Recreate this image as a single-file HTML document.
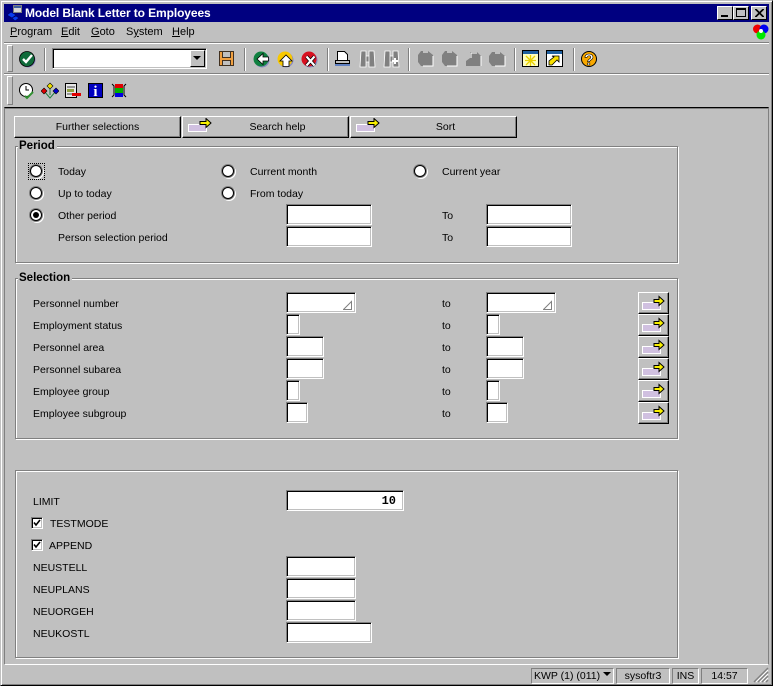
<!DOCTYPE html>
<html><head><meta charset="utf-8"><style>
html,body{margin:0;padding:0;background:#c0c0c0}
#w{position:relative;width:773px;height:686px;overflow:hidden;background:#c0c0c0;font:10.5px/14px "Liberation Sans",sans-serif;color:#000}
#w div,#w svg{position:absolute}
.t{white-space:nowrap;margin-top:1px}
.m{white-space:nowrap;font-size:11px}
.i{background:#fff;box-sizing:border-box;border-top:1px solid #808080;border-left:1px solid #808080;border-right:1px solid #fff;border-bottom:1px solid #fff;box-shadow:inset 1px 1px 0 #000,inset -1px -1px 0 #c0c0c0}
.g{box-sizing:border-box;border:1px solid #808080;box-shadow:1px 1px 0 #fff,inset 1px 1px 0 #fff}
.gt{background:#c0c0c0;font-weight:bold;padding:0 2px 0 1px;font-size:11.5px;white-space:nowrap}
.b{box-sizing:border-box;background:#c0c0c0;border-top:1px solid #fff;border-left:1px solid #fff;border-right:1px solid #000;border-bottom:1px solid #000;box-shadow:inset -1px -1px 0 #808080;text-align:center;line-height:21px}
.s{width:2px;height:23px;top:48px;background:linear-gradient(90deg,#808080 0,#808080 1px,#fff 1px)}
.gr{width:6px;box-sizing:border-box;border:1px solid;border-color:#fff #808080 #808080 #fff}
.f{box-sizing:border-box;height:16px;top:668px;border:1px solid;border-color:#808080 #fff #fff #808080;text-align:center;line-height:14px;white-space:nowrap}
.r{width:12px;height:12px;margin:-1px 0 0 -1px;border-radius:50%;background:#fff;box-sizing:border-box;border:1px solid #000;box-shadow:0 0 0 1px #808080,1px 1px 0 1px #fff}
u{text-decoration:underline}
</style></head><body><div id="w">
<!-- window frame -->
<div style="left:0;top:0;width:773px;height:686px;box-sizing:border-box;border:1px solid;border-color:#c0c0c0 #000 #000 #c0c0c0;box-shadow:inset 1px 1px 0 #fff,inset -1px -1px 0 #808080"></div>
<!-- title -->
<div style="left:4px;top:4px;width:765px;height:18px;background:#000080"></div>
<svg style="left:6px;top:4px" width="18" height="18"><rect x="7.500" y="1.500" width="8" height="7" fill="#d8d8d8" stroke="#808080"/><rect x="8" y="2" width="7" height="2" fill="#4060a0"/><path d="M1 11l4-3 5 3-4 3zM6 14l4-2 3 2-4 3z" fill="#0a3cf0" stroke="#000060" stroke-width=".6"/></svg>
<div class="m" style="left:25px;top:6px;color:#fff;font-weight:bold;font-size:12px;line-height:14px;letter-spacing:-.1px">Model Blank Letter to Employees</div>
<div style="left:717px;top:6px;width:16px;height:14px;box-sizing:border-box;background:#c0c0c0;border:1px solid;border-color:#fff #000 #000 #fff"><div style="left:3px;top:8px;width:7px;height:2px;background:#000"></div></div>
<div style="left:733px;top:6px;width:16px;height:14px;box-sizing:border-box;background:#c0c0c0;border:1px solid;border-color:#fff #000 #000 #fff"><div style="left:2px;top:1px;width:10px;height:9px;box-sizing:border-box;border:1px solid #000;border-top-width:2px"></div></div>
<div style="left:751px;top:6px;width:16px;height:14px;box-sizing:border-box;background:#c0c0c0;border:1px solid;border-color:#fff #000 #000 #fff"><svg style="left:3px;top:2px" width="9" height="8"><path d="M0 0l8 8M1 0l8 8M8 0l-8 8M9 0l-8 8" stroke="#000" stroke-width="1"/></svg></div>
<!-- menu -->
<div class="m" style="left:10px;top:25px"><u>P</u>rogram</div>
<div class="m" style="left:61px;top:25px"><u>E</u>dit</div>
<div class="m" style="left:91px;top:25px"><u>G</u>oto</div>
<div class="m" style="left:126px;top:25px">S<u>y</u>stem</div>
<div class="m" style="left:172px;top:25px"><u>H</u>elp</div>
<svg style="left:752px;top:22px" width="18" height="18"><circle cx="5.500" cy="7" r="4.500" fill="#f00000"/><circle cx="12" cy="7" r="4.500" fill="#0000f0"/><circle cx="9" cy="13" r="4.500" fill="#00e800"/><circle cx="9" cy="9" r="2" fill="#fff"/></svg>
<div style="left:4px;top:42px;width:765px;height:2px;background:linear-gradient(#808080 1px,#fff 1px)"></div>
<div style="left:4px;top:73px;width:765px;height:2px;background:linear-gradient(#808080 1px,#fff 1px)"></div>
<div class="gr" style="left:7px;top:45px;height:27px"></div>
<div class="gr" style="left:7px;top:76px;height:29px"></div>
<!-- toolbar 1 -->
<svg style="left:18px;top:50px" width="18" height="18"><circle cx="10" cy="10" r="7.500" fill="#8888c0"/><circle cx="9" cy="9" r="7.500" fill="#0f6b3a" stroke="#000" stroke-width=".8"/><path d="M5 9l3 3 6-7" fill="none" stroke="#fff" stroke-width="2.400"/></svg>
<div class="s" style="left:44px"></div>
<div class="i" style="left:52px;top:48px;width:155px;height:21px"></div>
<div style="left:190px;top:50px;width:15px;height:17px;box-sizing:border-box;background:#c0c0c0;border:1px solid;border-color:#fff #000 #000 #fff"></div>
<svg style="left:193px;top:56px" width="9" height="5"><path d="M0 0h8l-4 4z" fill="#000"/></svg>
<svg style="left:218px;top:50px" width="17" height="17"><path d="M1.500 1.500h14v14h-14z" fill="#f0a040" stroke="#403020"/><rect x="4.500" y="1.500" width="8" height="6" fill="#c0c0c0" stroke="#403020"/><rect x="4.500" y="10.500" width="8" height="5" fill="#c0c0c0" stroke="#403020"/></svg>
<div class="s" style="left:244px"></div>
<svg style="left:252px;top:50px" width="18" height="18"><circle cx="10" cy="10" r="7.500" fill="#8888c0"/><circle cx="9" cy="9" r="7.500" fill="#108040"/><path d="M16.500 7H11V3.500L5 9l6 5.500V11h5.500z" fill="#fff" stroke="#000" stroke-width=".8"/></svg>
<svg style="left:276px;top:50px" width="18" height="18"><circle cx="10" cy="10" r="7.500" fill="#8888c0"/><circle cx="9" cy="9" r="7.500" fill="#f8c800"/><path d="M7 16.500V11H4l6-6 6 6h-3v5.500z" fill="#fff" stroke="#000" stroke-width=".8"/></svg>
<svg style="left:300px;top:50px" width="18" height="18"><circle cx="10" cy="10" r="7.500" fill="#8888c0"/><circle cx="9" cy="9" r="7.500" fill="#d81020"/><path d="M6.500 6.500l8 9M14.500 6.500l-8 9" stroke="#000" stroke-width="3.600"/><path d="M6.500 6.500l8 9M14.500 6.500l-8 9" stroke="#fff" stroke-width="2.200"/></svg>
<div class="s" style="left:327px"></div>
<svg style="left:334px;top:50px" width="17" height="17"><path d="M3.500 1.500h7l3 3v6h-10z" fill="#fff" stroke="#000"/><path d="M1.500 10.500h14v3h-14z" fill="#c0c0c0" stroke="#000"/><path d="M1 14h15v2H1z" fill="#6080c0"/></svg>
<svg style="left:359px;top:49px" width="17" height="19"><path d="M2 2h5v16H1zM10 2h5l1 16h-6zM7 7h3v6H7z" fill="#808080" stroke="#fff" stroke-width=".8"/></svg>
<svg style="left:383px;top:49px" width="17" height="19"><path d="M2 2h5v16H1zM10 2h5l1 16h-6zM7 7h3v6H7z" fill="#808080" stroke="#fff" stroke-width=".8"/><path d="M12 9v6M9 12h6" stroke="#fff" stroke-width="2"/></svg>
<div class="s" style="left:408px"></div>
<svg style="left:417px;top:50px" width="17" height="17"><path d="M1 5l3-4h7l5 4v11H4l-3-4z" fill="#808080"/><path d="M6 2h5M16 6v10H6" stroke="#fff" fill="none"/></svg>
<svg style="left:441px;top:50px" width="17" height="17"><path d="M1 5l3-4h7l5 4v11H4l-3-4z" fill="#808080"/><path d="M6 2h5M16 6v10H6" stroke="#fff" fill="none"/></svg>
<svg style="left:465px;top:50px" width="17" height="17"><path d="M1 11l4-3V2h7l4 4v10H1z" fill="#808080"/><path d="M6 8V3h6M16 6v10" stroke="#fff" fill="none"/></svg>
<svg style="left:489px;top:50px" width="17" height="17"><path d="M0 6l3-4h8l5 4v10H3l-3-4z" fill="#808080"/><path d="M6 3h5M16 6v10H6" stroke="#fff" fill="none"/></svg>
<div class="s" style="left:514px"></div>
<svg style="left:522px;top:50px" width="18" height="18"><rect x=".5" y=".5" width="16" height="16" fill="#ffffc0" stroke="#000"/><rect x="1" y="1" width="15" height="3" fill="#2060a0"/><path d="M8.500 5v11M3 10.500h11M4 6l9 9M13 6l-9 9" stroke="#e8d000" stroke-width="1.300"/></svg>
<svg style="left:546px;top:50px" width="18" height="18"><rect x=".5" y=".5" width="16" height="16" fill="#fff" stroke="#000"/><rect x="1" y="1" width="15" height="3" fill="#2060a0"/><path d="M3 15v-4l5-4-2-1h7v6l-2-2-5 5z" fill="#f8e000" stroke="#000" stroke-width=".8"/></svg>
<div class="s" style="left:573px"></div>
<svg style="left:580px;top:50px" width="18" height="18"><circle cx="9" cy="9" r="7.500" fill="#f8a800" stroke="#000"/><text x="9" y="15" text-anchor="middle" font-family="Liberation Sans" font-weight="bold" font-size="16" fill="#fff" stroke="#000" stroke-width=".6">?</text></svg>
<!-- toolbar 2 -->
<svg style="left:18px;top:82px" width="18" height="18"><circle cx="8" cy="8" r="6.500" fill="#fff" stroke="#000"/><path d="M8 4v4h3" fill="none" stroke="#000"/><path d="M7 14l2 2 6-6" fill="none" stroke="#309030" stroke-width="2"/></svg>
<svg style="left:41px;top:82px" width="18" height="18"><path d="M9 3v10M3 9l6 7 6-7" fill="none" stroke="#208040"/><path d="M9 1l3 3-3 3-3-3z" fill="#f0e000" stroke="#000" stroke-width=".6"/><path d="M3 6l3 3-3 3-3-3z" fill="#e00000" stroke="#000" stroke-width=".6"/><path d="M15 6l3 3-3 3-3-3z" fill="#0000d0" stroke="#000" stroke-width=".6"/></svg>
<svg style="left:65px;top:83px" width="17" height="17"><rect x=".5" y=".5" width="11" height="14" fill="#e8e8e8" stroke="#000"/><path d="M2 4h8M2 11h6" stroke="#404040"/><rect x="2" y="6" width="7" height="3" fill="#90a040"/><rect x="7" y="10" width="9" height="3" fill="#e00000"/></svg>
<svg style="left:88px;top:83px" width="16" height="16"><rect x=".5" y=".5" width="14" height="14" fill="#0000c0" stroke="#000"/><text x="7.500" y="13" text-anchor="middle" font-family="Liberation Serif" font-weight="bold" font-size="15" fill="#fff">i</text></svg>
<svg style="left:111px;top:83px" width="16" height="16"><rect x="4" y="1" width="8" height="4" fill="#e00000"/><rect x="4" y="5" width="8" height="5" fill="#00b000"/><rect x="4" y="10" width="8" height="4" fill="#0000e0"/><path d="M1 1l2 2v9l-2 2M15 1l-2 2v9l2 2" fill="none" stroke="#000"/></svg>
<!-- content frame -->
<div style="left:4px;top:107px;width:765px;height:558px;box-sizing:border-box;border-top:1px solid #000;border-left:1px solid #808080;border-right:1px solid #808080;border-bottom:1px solid #fff;box-shadow:inset 0 1px 0 #808080"></div>
<!-- top buttons -->
<div class="b" style="left:14px;top:116px;width:167px;height:22px">Further selections</div>
<div class="b" style="left:182px;top:116px;width:167px;height:22px;padding-left:24px">Search help</div>
<div class="b" style="left:350px;top:116px;width:167px;height:22px;padding-left:24px">Sort</div>
<svg style="left:188px;top:118px" width="26" height="17"><rect x=".5" y="6.500" width="18" height="7" fill="#d0c0e0" stroke="#fff"/><path d="M12 3.500h6v-3l5 4.500-5 4.500v-3h-6z" fill="#f8f000" stroke="#000"/></svg>
<svg style="left:356px;top:118px" width="26" height="17"><rect x=".5" y="6.500" width="18" height="7" fill="#d0c0e0" stroke="#fff"/><path d="M12 3.500h6v-3l5 4.500-5 4.500v-3h-6z" fill="#f8f000" stroke="#000"/></svg>
<!-- Period -->
<div class="g" style="left:15px;top:146px;width:663px;height:117px"></div>
<div class="gt" style="left:18px;top:139px">Period</div>
<div style="left:28px;top:163px;width:17px;height:17px;box-sizing:border-box;border:1px dotted #000"></div>
<div class="r" style="left:31px;top:166px"></div>
<div class="r" style="left:31px;top:188px"></div>
<div class="r" style="left:31px;top:210px"></div><div style="left:33px;top:212px;width:6px;height:6px;border-radius:50%;background:#000"></div>
<div class="r" style="left:223px;top:166px"></div>
<div class="r" style="left:223px;top:188px"></div>
<div class="r" style="left:415px;top:166px"></div>
<div class="t" style="left:58px;top:164px">Today</div>
<div class="t" style="left:58px;top:186px">Up to today</div>
<div class="t" style="left:58px;top:208px">Other period</div>
<div class="t" style="left:58px;top:230px">Person selection period</div>
<div class="t" style="left:250px;top:164px">Current month</div>
<div class="t" style="left:250px;top:186px">From today</div>
<div class="t" style="left:442px;top:164px">Current year</div>
<div class="t" style="left:442px;top:208px">To</div>
<div class="t" style="left:442px;top:230px">To</div>
<div class="i" style="left:286px;top:204px;width:86px;height:21px"></div>
<div class="i" style="left:286px;top:226px;width:86px;height:21px"></div>
<div class="i" style="left:486px;top:204px;width:86px;height:21px"></div>
<div class="i" style="left:486px;top:226px;width:86px;height:21px"></div>
<!-- Selection -->
<div class="g" style="left:15px;top:278px;width:663px;height:161px"></div>
<div class="gt" style="left:18px;top:271px">Selection</div>
<div class="t" style="left:33px;top:296px">Personnel number</div>
<div class="t" style="left:33px;top:318px">Employment status</div>
<div class="t" style="left:33px;top:340px">Personnel area</div>
<div class="t" style="left:33px;top:362px">Personnel subarea</div>
<div class="t" style="left:33px;top:384px">Employee group</div>
<div class="t" style="left:33px;top:406px">Employee subgroup</div>
<div class="t" style="left:442px;top:296px">to</div>
<div class="t" style="left:442px;top:318px">to</div>
<div class="t" style="left:442px;top:340px">to</div>
<div class="t" style="left:442px;top:362px">to</div>
<div class="t" style="left:442px;top:384px">to</div>
<div class="t" style="left:442px;top:406px">to</div>
<div class="i" style="left:286px;top:292px;width:70px;height:21px"></div>
<div class="i" style="left:486px;top:292px;width:70px;height:21px"></div>
<svg style="left:343px;top:300px" width="10" height="10"><path d="M.5 9.500l8-8v8z" fill="none" stroke="#808080"/></svg>
<svg style="left:543px;top:300px" width="10" height="10"><path d="M.5 9.500l8-8v8z" fill="none" stroke="#808080"/></svg>
<div class="i" style="left:286px;top:314px;width:14px;height:21px"></div>
<div class="i" style="left:486px;top:314px;width:14px;height:21px"></div>
<div class="i" style="left:286px;top:336px;width:38px;height:21px"></div>
<div class="i" style="left:486px;top:336px;width:38px;height:21px"></div>
<div class="i" style="left:286px;top:358px;width:38px;height:21px"></div>
<div class="i" style="left:486px;top:358px;width:38px;height:21px"></div>
<div class="i" style="left:286px;top:380px;width:14px;height:21px"></div>
<div class="i" style="left:486px;top:380px;width:14px;height:21px"></div>
<div class="i" style="left:286px;top:402px;width:22px;height:21px"></div>
<div class="i" style="left:486px;top:402px;width:22px;height:21px"></div>
<div class="b" style="left:638px;top:292px;width:31px;height:22px"><svg style="left:2px;top:2px" width="26" height="17"><rect x="1.500" y="7.500" width="18" height="7" fill="#d0c0e0" stroke="#fff"/><path d="M13 4.500h5v-3l5 4.500-5 4.500v-3h-5z" fill="#f8f000" stroke="#000"/></svg></div>
<div class="b" style="left:638px;top:314px;width:31px;height:22px"><svg style="left:2px;top:2px" width="26" height="17"><rect x="1.500" y="7.500" width="18" height="7" fill="#d0c0e0" stroke="#fff"/><path d="M13 4.500h5v-3l5 4.500-5 4.500v-3h-5z" fill="#f8f000" stroke="#000"/></svg></div>
<div class="b" style="left:638px;top:336px;width:31px;height:22px"><svg style="left:2px;top:2px" width="26" height="17"><rect x="1.500" y="7.500" width="18" height="7" fill="#d0c0e0" stroke="#fff"/><path d="M13 4.500h5v-3l5 4.500-5 4.500v-3h-5z" fill="#f8f000" stroke="#000"/></svg></div>
<div class="b" style="left:638px;top:358px;width:31px;height:22px"><svg style="left:2px;top:2px" width="26" height="17"><rect x="1.500" y="7.500" width="18" height="7" fill="#d0c0e0" stroke="#fff"/><path d="M13 4.500h5v-3l5 4.500-5 4.500v-3h-5z" fill="#f8f000" stroke="#000"/></svg></div>
<div class="b" style="left:638px;top:380px;width:31px;height:22px"><svg style="left:2px;top:2px" width="26" height="17"><rect x="1.500" y="7.500" width="18" height="7" fill="#d0c0e0" stroke="#fff"/><path d="M13 4.500h5v-3l5 4.500-5 4.500v-3h-5z" fill="#f8f000" stroke="#000"/></svg></div>
<div class="b" style="left:638px;top:402px;width:31px;height:22px"><svg style="left:2px;top:2px" width="26" height="17"><rect x="1.500" y="7.500" width="18" height="7" fill="#d0c0e0" stroke="#fff"/><path d="M13 4.500h5v-3l5 4.500-5 4.500v-3h-5z" fill="#f8f000" stroke="#000"/></svg></div>
<!-- Third group -->
<div class="g" style="left:15px;top:470px;width:663px;height:188px"></div>
<div class="t" style="left:33px;top:494px">LIMIT</div>
<div class="i" style="left:286px;top:490px;width:118px;height:21px"></div>
<div class="t" style="left:376px;top:493px;width:20px;text-align:right;font:bold 12px/14px 'Liberation Mono',monospace">10</div>
<div class="i" style="left:31px;top:517px;width:12px;height:12px"></div>
<svg style="left:31px;top:517px" width="12" height="12"><path d="M3 5.500l2 2.500 4-5" fill="none" stroke="#000" stroke-width="1.600"/></svg>
<div class="t" style="left:50px;top:516px">TESTMODE</div>
<div class="i" style="left:31px;top:539px;width:12px;height:12px"></div>
<svg style="left:31px;top:539px" width="12" height="12"><path d="M3 5.500l2 2.500 4-5" fill="none" stroke="#000" stroke-width="1.600"/></svg>
<div class="t" style="left:49px;top:538px">APPEND</div>
<div class="t" style="left:33px;top:560px">NEUSTELL</div>
<div class="t" style="left:33px;top:582px">NEUPLANS</div>
<div class="t" style="left:33px;top:604px">NEUORGEH</div>
<div class="t" style="left:33px;top:626px">NEUKOSTL</div>
<div class="i" style="left:286px;top:556px;width:70px;height:21px"></div>
<div class="i" style="left:286px;top:578px;width:70px;height:21px"></div>
<div class="i" style="left:286px;top:600px;width:70px;height:21px"></div>
<div class="i" style="left:286px;top:622px;width:86px;height:21px"></div>
<!-- status -->
<div class="f" style="left:531px;width:83px;text-align:left;padding-left:2px">KWP (1) (011)</div>
<svg style="left:603px;top:672px" width="9" height="6"><path d="M0 0h8l-4 4z" fill="#000"/></svg>
<div class="f" style="left:616px;width:54px">sysoftr3</div>
<div class="f" style="left:672px;width:27px">INS</div>
<div class="f" style="left:701px;width:47px">14:57</div>
<svg style="left:753px;top:667px" width="16" height="16"><path d="M15 1L1 15M15 5L5 15M15 9L9 15M15 13l-2 2" stroke="#808080" stroke-width="1.500"/><path d="M15 3L3 15M15 7L7 15M15 11l-4 4" stroke="#fff"/></svg>
</div></body></html>
